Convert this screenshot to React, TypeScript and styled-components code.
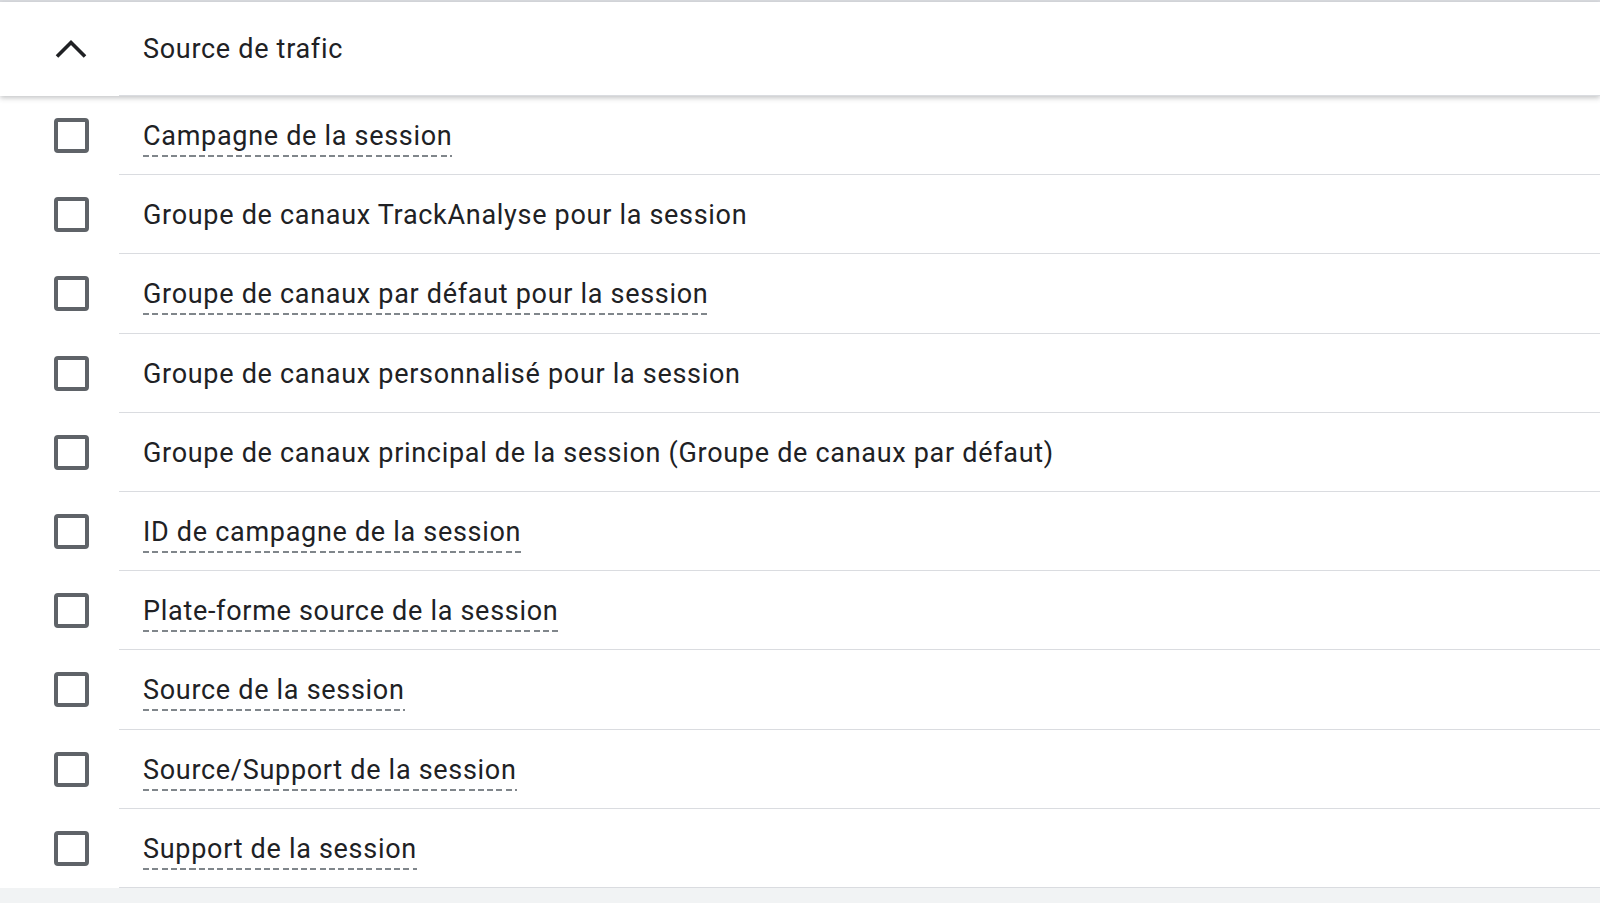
import React from "react";
import styled, { createGlobalStyle } from "styled-components";

const GlobalStyle = createGlobalStyle`
  html, body {
    margin: 0;
    padding: 0;
    background: #f1f3f4;
    font-family: Roboto, "Noto Sans", Arial, sans-serif;
  }
`;

const Panel = styled.section`
  background: #ffffff;
  border-top: 2px solid #dadce0;
`;

const Header = styled.div`
  position: relative;
  z-index: 1;
  display: flex;
  height: 94px;
  background: #ffffff;
  box-shadow: 0 2px 5px rgba(60, 64, 67, 0.3);
`;

const IconCell = styled.div`
  width: 119px;
  flex-shrink: 0;
  display: flex;
  align-items: center;
  padding-left: 55px;
  box-sizing: border-box;
`;

const HeaderTitle = styled.div`
  flex: 1;
  display: flex;
  align-items: center;
  padding-left: 24px;
  border-bottom: 1px solid #dadce0;
  font-size: 27px;
  color: #202124;
  letter-spacing: 0.7px;
`;

const List = styled.ul`
  list-style: none;
  margin: 0;
  padding: 0;
`;

const Row = styled.li`
  display: flex;
  height: 79.2px;
`;

const CheckCell = styled.div`
  width: 119px;
  flex-shrink: 0;
  display: flex;
  align-items: center;
  padding-left: 54px;
  box-sizing: border-box;
`;

const Checkbox = styled.span`
  box-sizing: border-box;
  width: 35px;
  height: 35px;
  border: 4px solid #5f6368;
  border-radius: 4px;
`;

const LabelCell = styled.div`
  flex: 1;
  display: flex;
  align-items: center;
  padding-left: 24px;
  border-bottom: 1px solid #dadce0;
`;

const Label = styled.span<{ $described: boolean }>`
  font-size: 27px;
  color: #202124;
  letter-spacing: 0.7px;
  line-height: 34px;
  padding-bottom: 4px;
  margin-top: 6px;
  background-image: ${(p) =>
    p.$described
      ? "repeating-linear-gradient(to right, #80868b 0 6px, transparent 6px 9.3px)"
      : "none"};
  background-repeat: no-repeat;
  background-size: 100% 2px;
  background-position: 0 100%;
`;

const ChevronUp = () => (
  <svg width="32" height="20" viewBox="0 0 32 20" aria-hidden="true">
    <polyline
      points="2,17.5 16,3.5 30,17.5"
      fill="none"
      stroke="#202124"
      strokeWidth="3.6"
    />
  </svg>
);

const dimensions = [
  { name: "Campagne de la session", described: true },
  { name: "Groupe de canaux TrackAnalyse pour la session", described: false },
  { name: "Groupe de canaux par défaut pour la session", described: true },
  { name: "Groupe de canaux personnalisé pour la session", described: false },
  {
    name: "Groupe de canaux principal de la session (Groupe de canaux par défaut)",
    described: false,
  },
  { name: "ID de campagne de la session", described: true },
  { name: "Plate-forme source de la session", described: true },
  { name: "Source de la session", described: true },
  { name: "Source/Support de la session", described: true },
  { name: "Support de la session", described: true },
];

export default function App() {
  return (
    <>
      <GlobalStyle />
      <Panel>
        <Header>
          <IconCell>
            <ChevronUp />
          </IconCell>
          <HeaderTitle>Source de trafic</HeaderTitle>
        </Header>
        <List>
          {dimensions.map((d) => (
            <Row key={d.name}>
              <CheckCell>
                <Checkbox />
              </CheckCell>
              <LabelCell>
                <Label $described={d.described}>{d.name}</Label>
              </LabelCell>
            </Row>
          ))}
        </List>
      </Panel>
    </>
  );
}
